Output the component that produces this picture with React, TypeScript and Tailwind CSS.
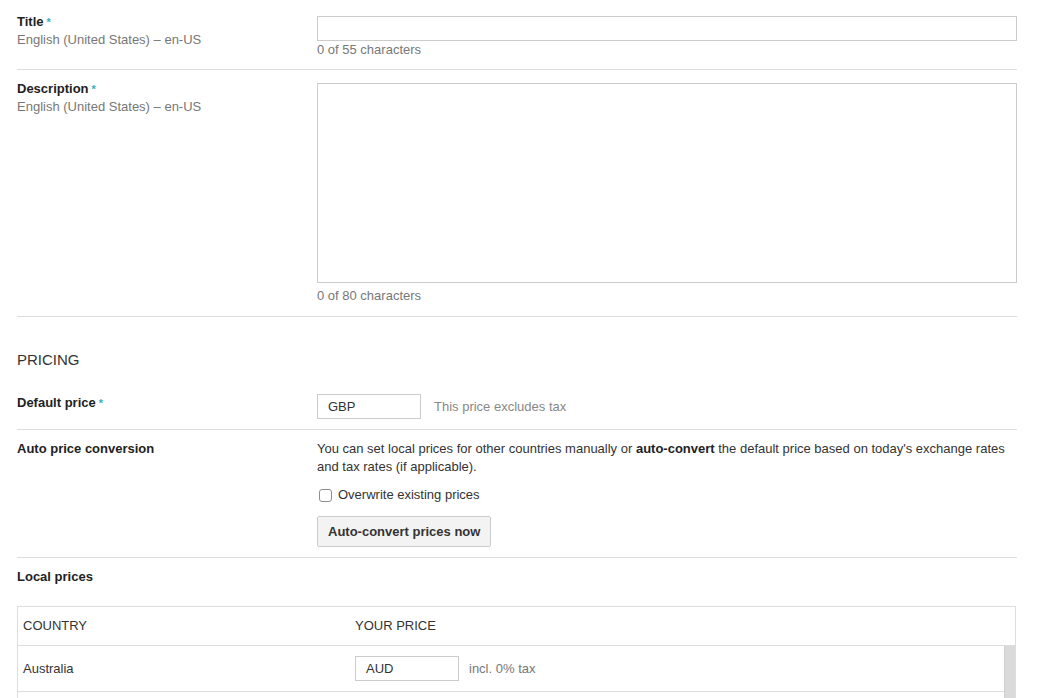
import React from "react";

const Req = () => <span className="ml-[3px] text-[11px] text-[#3aaebf] align-top">*</span>;

function FieldInput({ value, width = "w-full" }: { value?: string; width?: string }) {
  return (
    <div className={`${width} h-[25px] border border-[#ccc] bg-white pl-[10px] flex items-center text-[13px] text-[#333]`}>
      {value}
    </div>
  );
}

export default function App() {
  return (
    <div className="min-h-screen bg-white font-['Liberation_Sans',Arial,sans-serif] text-[13px] leading-[18px] text-[#333]">
      <div className="pl-[17px] w-[1017px]">
        {/* Title */}
        <div className="flex pt-[13px] pb-[11px] border-b border-[#ddd]">
          <div className="w-[300px] shrink-0">
            <div className="font-bold text-[#222]">Title<Req /></div>
            <div className="text-[#777]">English (United States) – en-US</div>
          </div>
          <div className="flex-1">
            <div className="mt-[3px]">
              <FieldInput />
            </div>
            <div className="mt-[1px] leading-[16px] text-[#777]">0 of 55 characters</div>
          </div>
        </div>

        {/* Description */}
        <div className="flex pt-[9px] pb-[12px] border-b border-[#ddd]">
          <div className="w-[300px] shrink-0 pt-[1px]">
            <div className="font-bold text-[#222]">Description<Req /></div>
            <div className="text-[#777]">English (United States) – en-US</div>
          </div>
          <div className="flex-1">
            <textarea className="block mt-[4px] w-full h-[200px] border border-[#ccc] resize-none outline-none" />
            <div className="mt-[5px] leading-[16px] text-[#777]">0 of 80 characters</div>
          </div>
        </div>

        {/* Pricing */}
        <div className="pt-[34px] pb-[25px] text-[15px] leading-[18px] text-[#333] uppercase">Pricing</div>

        <div className="flex pb-[10px] border-b border-[#ddd]">
          <div className="w-[300px] shrink-0 font-bold text-[#222]">Default price<Req /></div>
          <div className="flex-1 flex items-center">
            <FieldInput value="GBP" width="w-[104px]" />
            <span className="ml-[13px] text-[#888]">This price excludes tax</span>
          </div>
        </div>

        <div className="flex pt-[10px] pb-[10px] border-b border-[#ddd]">
          <div className="w-[300px] shrink-0 font-bold text-[#222]">Auto price conversion</div>
          <div className="flex-1">
            <p>
              You can set local prices for other countries manually or <b className="text-[#222]">auto-convert</b> the default price based on today's exchange rates and tax rates (if applicable).
            </p>
            <label className="mt-[10px] flex items-center">
              <span className="ml-[2px] mr-[6px] w-[13px] h-[13px] rounded-[3px] border border-[#8f8f8f] bg-white" />
              <span>Overwrite existing prices</span>
            </label>
            <button className="mt-[12px] h-[31px] px-[10px] border border-[#ccc] rounded-[2px] bg-[#f3f3f3] font-bold text-[#333]">
              Auto-convert prices now
            </button>
          </div>
        </div>

        <div className="pt-[10px] font-bold text-[#222]">Local prices</div>

        {/* Table */}
        <div className="mt-[20px] w-[999px] border border-[#ddd]">
          <div className="flex h-[39px] items-center border-b border-[#ddd] uppercase text-[#333]">
            <div className="w-[337px] pl-[5px]">Country</div>
            <div>Your price</div>
          </div>
          <div className="flex">
            <div className="flex-1">
              <div className="flex h-[46px] items-center border-b border-[#ddd]">
                <div className="w-[337px] pl-[5px]">Australia</div>
                <FieldInput value="AUD" width="w-[104px]" />
                <span className="ml-[10px] text-[#777]">incl. 0% tax</span>
              </div>
              <div className="flex h-[46px] items-center border-b border-[#ddd]">
                <div className="w-[337px] pl-[5px]">Austria</div>
                <FieldInput value="EUR" width="w-[104px]" />
                <span className="ml-[10px] text-[#777]">incl. 20% tax</span>
              </div>
            </div>
            <div className="w-[11px] bg-[#dadada] border-l border-[#cfcfcf]" />
          </div>
        </div>
      </div>
    </div>
  );
}
